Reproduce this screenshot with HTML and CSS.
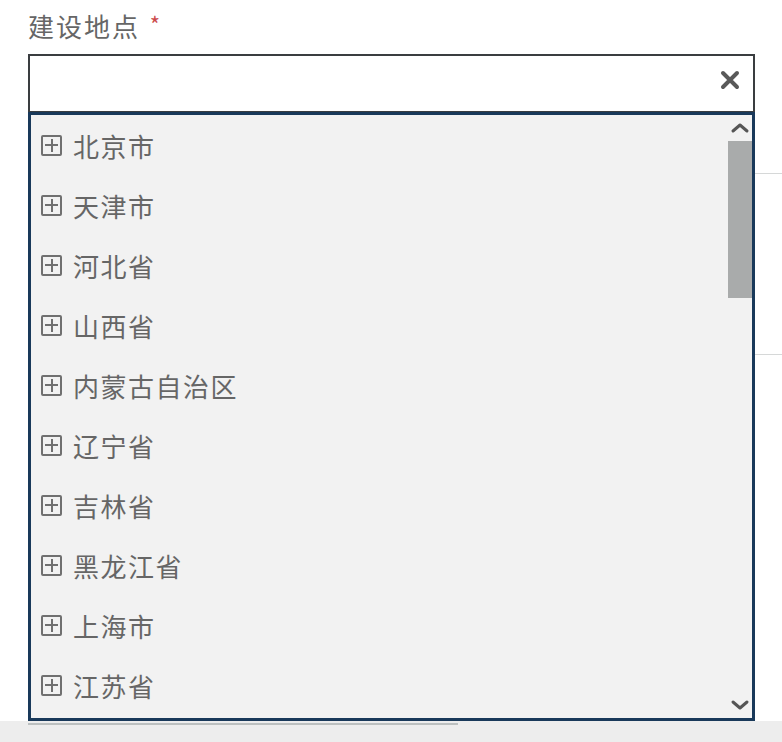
FILE: index.html
```html
<!DOCTYPE html>
<html lang="zh-CN">
<head>
<meta charset="utf-8">
<title>建设地点</title>
<link rel="stylesheet" href="styles.css">
</head>
<body>
<div class="page">
  <div class="field">
    <div class="label">建设地点 <span class="req">*</span></div>
    <div class="select">
      <svg class="clear" width="22" height="22" viewBox="0 0 22 22"><path d="M4 4 L18 18 M18 4 L4 18" stroke="#595959" stroke-width="4" stroke-linecap="round" fill="none"/></svg>
      <div class="dropdown">
        <ul class="list">
          <li class="item"><span class="tog"></span>北京市</li>
          <li class="item"><span class="tog"></span>天津市</li>
          <li class="item"><span class="tog"></span>河北省</li>
          <li class="item"><span class="tog"></span>山西省</li>
          <li class="item"><span class="tog"></span>内蒙古自治区</li>
          <li class="item"><span class="tog"></span>辽宁省</li>
          <li class="item"><span class="tog"></span>吉林省</li>
          <li class="item"><span class="tog"></span>黑龙江省</li>
          <li class="item"><span class="tog"></span>上海市</li>
          <li class="item"><span class="tog"></span>江苏省</li>
        </ul>
        <div class="scrollbar">
          <svg class="arrow up" width="24" height="26" viewBox="0 0 24 26"><path d="M5 16 L12 10 L19 16" stroke="#555" stroke-width="3" fill="none" stroke-linecap="round" stroke-linejoin="round"/></svg>
          <div class="thumb"></div>
          <div class="track"></div>
          <svg class="arrow" width="24" height="26" viewBox="0 0 24 26"><path d="M5 10 L12 16 L19 10" stroke="#555" stroke-width="3" fill="none" stroke-linecap="round" stroke-linejoin="round"/></svg>
        </div>
      </div>
    </div>
  </div>
  <div class="under under-a"></div>
  <div class="under under-b"></div>
  <div class="footer"><div class="footer-line"></div></div>
</div>
</body>
</html>
```
FILE: styles.css
```css
html, body {
  margin: 0;
  padding: 0;
  background: #ffffff;
}
body {
  font-family: "Noto Sans CJK SC", "Noto Sans", sans-serif;
  color: #666666;
  width: 782px;
  height: 742px;
  overflow: hidden;
}
.page {
  display: flex;
  flex-direction: column;
  height: 742px;
}
.field {
  padding-left: 28px;
  width: 727px;
}
.label {
  height: 54px;
  font-size: 26px;
  line-height: 46px;
  letter-spacing: 2px;
  color: #666666;
}
.req {
  color: #cc4b4b;
  font-size: 22px;
  vertical-align: 4px;
  letter-spacing: 0;
  margin-left: 2px;
}
.select {
  position: relative;
  box-sizing: border-box;
  width: 727px;
  height: 59px;
  border: 2px solid #3a3d40;
  background: #ffffff;
  z-index: 2;
}
.clear {
  position: absolute;
  right: 12px;
  top: 13px;
}
.dropdown {
  position: absolute;
  left: -2px;
  top: 56px;
  box-sizing: border-box;
  width: 727px;
  height: 609px;
  border: 3px solid #19395a;
  background: #f2f2f2;
  display: flex;
}
.list {
  list-style: none;
  margin: 0;
  padding: 0;
  flex: 1;
}
.item {
  height: 60px;
  display: flex;
  align-items: center;
  padding-left: 10px;
  font-size: 26px;
  letter-spacing: 1.5px;
  color: #666666;
}
.tog {
  position: relative;
  box-sizing: border-box;
  width: 21px;
  height: 21px;
  border: 2px solid #707070;
  border-radius: 2px;
  margin-right: 11px;
  flex: none;
}
.tog::before, .tog::after {
  content: "";
  position: absolute;
  background: #707070;
}
.tog::before {
  left: 2px;
  right: 2px;
  top: 7.5px;
  height: 2px;
}
.tog::after {
  top: 2px;
  bottom: 2px;
  left: 7.5px;
  width: 2px;
}
.scrollbar {
  width: 24px;
  display: flex;
  flex-direction: column;
  align-items: center;
}
.arrow {
  flex: none;
  display: block;
}
.thumb {
  width: 24px;
  height: 157px;
  background: #a9abab;
  flex: none;
}
.track {
  flex: 1;
}
.under {
  margin-left: 28px;
  border-top: 1px solid #d6d8d8;
}
.under-a {
  margin-top: 60px;
  height: 180px;
}
.under-b {
  flex: 1;
}
.footer {
  height: 21px;
  background: #ededed;
  padding-top: 2px;
  box-sizing: border-box;
}
.footer-line {
  margin-left: 28px;
  width: 430px;
  height: 2px;
  background: #bcc0c0;
}
```
